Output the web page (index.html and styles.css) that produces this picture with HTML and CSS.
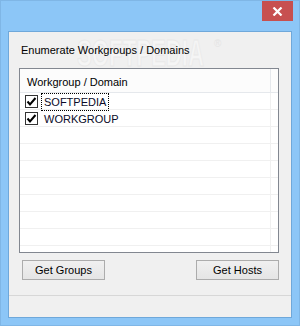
FILE: index.html
```html
<!DOCTYPE html>
<html>
	<head>
		<meta charset="UTF-8">
		<title>Enumerate Workgroups / Domains</title>
		<link rel="stylesheet" href="styles.css">
	</head>
	<body>
		<div class="win">
			<div class="titlebar">
				<div class="close">
					<svg width="11" height="9" viewBox="0 0 11 9">
						<path d="M1.5 0.5 L9.5 8.5 M9.5 0.5 L1.5 8.5" stroke="#fff" stroke-width="2.2"/>
					</svg>
				</div>
			</div>
			<div class="client">
				<div class="watermark"><span class="wm-text">SOFTPEDIA</span><span class="wm-reg">®</span></div>
				<div class="main">
					<p class="caption">Enumerate Workgroups / Domains</p>
					<div class="listbox">
						<div class="header">
							<div class="col">Workgroup / Domain</div>
							<div class="col-rest"></div>
						</div>
						<div class="rows">
							<div class="row">
								<span class="chk"><svg width="11" height="11" viewBox="0 0 11 11"><path d="M1.5 5.5 L4 8.5 L9.5 2" stroke="#000" stroke-width="2" fill="none"/></svg></span>
								<span class="label focus">SOFTPEDIA</span>
							</div>
							<div class="row">
								<span class="chk"><svg width="11" height="11" viewBox="0 0 11 11"><path d="M1.5 5.5 L4 8.5 L9.5 2" stroke="#000" stroke-width="2" fill="none"/></svg></span>
								<span class="label">WORKGROUP</span>
							</div>
						</div>
					</div>
					<div class="buttons">
						<button class="btn">Get Groups</button>
						<button class="btn">Get Hosts</button>
					</div>
				</div>
				<div class="status"></div>
			</div>
		</div>
	</body>
</html>
```

FILE: styles.css
```css
* {
	margin: 0;
	padding: 0;
	box-sizing: border-box;
}

body {
	width: 300px;
	height: 326px;
	overflow: hidden;
	font-family: "Liberation Sans", Arial, sans-serif;
	font-size: 11px;
	color: #000;
}

.win {
	width: 300px;
	height: 326px;
	background: #8cc6f7;
	border: 1px solid #7fb6e6;
	display: flex;
	flex-direction: column;
}

.titlebar {
	height: 30px;
	display: flex;
	justify-content: flex-end;
	padding-right: 6px;
}

.close {
	width: 31px;
	height: 20px;
	background: #c75050;
	display: flex;
	align-items: center;
	justify-content: center;
}

.client {
	position: relative;
	margin: 0 7px 7px 7px;
	flex: 1;
	background: #f0f0f0;
	border: 1px solid #6fa8da;
	display: flex;
	flex-direction: column;
	overflow: hidden;
}

/* faint logo stamped over the dialog */
.watermark {
	position: absolute;
	left: 68px;
	top: 2px;
	width: 140px;
	pointer-events: none;
	white-space: nowrap;
}

.wm-text {
	display: inline-block;
	font-weight: bold;
	font-size: 37px;
	line-height: 40px;
	color: #f5f5f5;
	-webkit-text-stroke: 1px #e9e9e9;
	transform: scaleX(0.6);
	transform-origin: left top;
}

.wm-reg {
	position: absolute;
	left: 137px;
	top: 4px;
	font-size: 10px;
	color: #e4e4e4;
}

.main {
	flex: 1;
	padding: 10px 12px 0 10px;
	position: relative;
}

.caption {
	line-height: 14px;
	padding: 1px 0 0 2px;
	height: 26px;
	position: relative;
}

.listbox {
	height: 185px;
	background: #fff;
	border: 1px solid #828790;
	display: flex;
	flex-direction: column;
	position: relative;
}

.header {
	height: 24px;
	display: flex;
	background: #fcfcfc;
	border-bottom: 1px solid #e5e8ec;
}

.col {
	width: 251px;
	border-right: 1px solid #e5e8ec;
	padding: 7px 0 0 7px;
}

.col-rest {
	flex: 1;
}

.rows {
	flex: 1;
	background:
		linear-gradient(to right, transparent 250px, #f0f0f0 250px, #f0f0f0 251px, transparent 251px),
		repeating-linear-gradient(to bottom, transparent 0, transparent 16px, #f0f0f0 16px, #f0f0f0 17px);
}

.row {
	height: 17px;
	display: flex;
	align-items: center;
	padding-left: 5px;
}

.chk {
	width: 13px;
	height: 13px;
	border: 1px solid #333;
	background: #fff;
	display: flex;
	align-items: center;
	justify-content: center;
	margin-right: 3px;
}

.label {
	padding: 1px 2px;
	line-height: 14px;
	color: #0a0a28;
	border: 1px dotted transparent;
}

.label.focus {
	border-color: #000;
}

.buttons {
	display: flex;
	justify-content: space-between;
	padding: 7px 0 0 3px;
}

.btn {
	width: 83px;
	height: 20px;
	font-family: "Liberation Sans", Arial, sans-serif;
	font-size: 11px;
	color: #000;
	border: 1px solid #acacac;
	background: linear-gradient(#f0f0f0, #e5e5e5);
}

.status {
	height: 22px;
	border-top: 1px solid #d7d7d7;
}
```
